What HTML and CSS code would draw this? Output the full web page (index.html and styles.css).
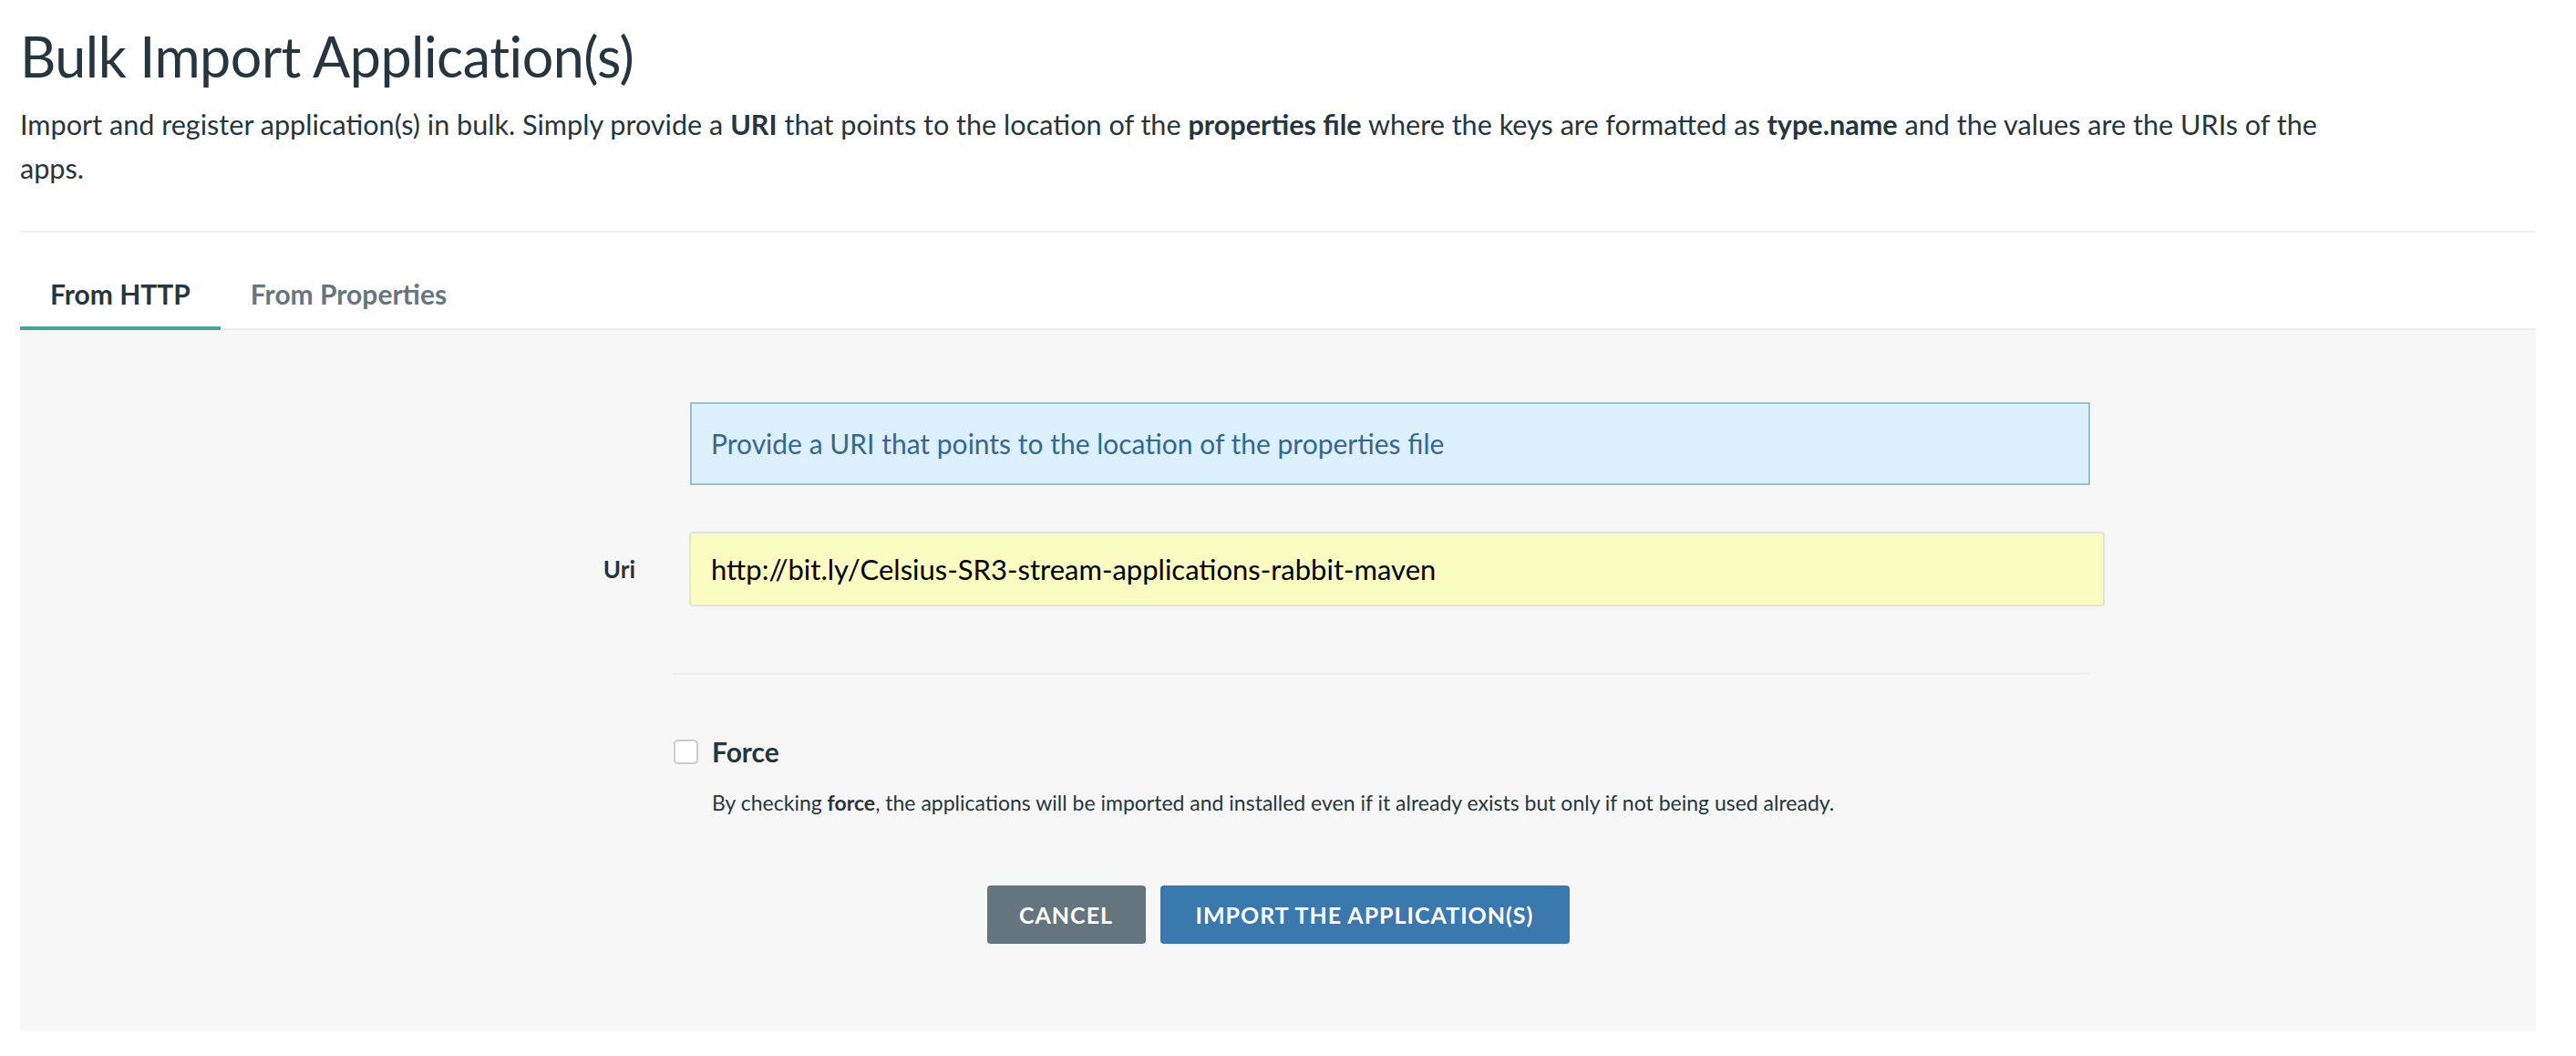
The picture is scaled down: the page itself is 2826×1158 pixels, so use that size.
FILE: index.html
```html
<!DOCTYPE html>
<html lang="en">
<head>
<meta charset="utf-8">
<title>Bulk Import Application(s)</title>
<link rel="stylesheet" href="styles.css">
</head>
<body>
<div class="page">
  <h1 class="title">Bulk Import Application(s)</h1>
  <p class="lead"><span>Import and register application(s) in bulk. Simply provide a <b>URI</b> that points to the location of the <b>properties file</b> where the keys are formatted as <b>type.name</b> and the values are the URIs of the</span> <span>apps.</span></p>
  <hr class="divider">

  <nav class="tabs">
    <a class="tab tab-active">From HTTP</a>
    <a class="tab">From Properties</a>
  </nav>

  <section class="panel">
    <form class="form">
      <div class="form-row">
        <div class="label-col"></div>
        <div class="field-col">
          <div class="info-box">Provide a URI that points to the location of the properties file</div>
        </div>
      </div>
      <div class="form-row row-uri">
        <label class="label-col uri-label">Uri</label>
        <div class="field-col">
          <div class="uri-input">http://bit.ly/Celsius-SR3-stream-applications-rabbit-maven</div>
        </div>
      </div>
      <div class="form-row">
        <div class="label-col"></div>
        <div class="field-col">
          <hr class="form-divider">
          <div class="check-row">
            <span class="checkbox"></span>
            <span class="check-label">Force</span>
          </div>
          <p class="help">By checking <b>force</b>, the applications will be imported and installed even if it already exists but only if not being used already.</p>
        </div>
      </div>
      <div class="actions">
        <button type="button" class="btn btn-cancel">Cancel</button>
        <button type="button" class="btn btn-primary">Import the application(s)</button>
      </div>
    </form>
  </section>
</div>
</body>
</html>
```

FILE: styles.css
```css
html, body {
  margin: 0;
  padding: 0;
  background: #ffffff;
}

body {
  font-family: "Lato", "Liberation Sans", sans-serif;
  color: #263640;
}

.page {
  padding: 0 44px 0 22px;
}

.title {
  margin: 0;
  padding-top: 26px;
  font-size: 61px;
  font-weight: 400;
  line-height: 72px;
  letter-spacing: -0.5px;
  color: #263640;
}

.lead {
  margin: 15px 0 0 0;
  max-width: 2580px;
  font-size: 30.6px;
  line-height: 48px;
  color: #263640;
}

.lead b {
  font-weight: 700;
}

.divider {
  margin: 44px 0 0 0;
  border: 0;
  height: 2px;
  background: #eeeeee;
}

.tabs {
  display: flex;
  margin-top: 48px;
  border-bottom: 2px solid #eeeeee;
}

.tab {
  display: block;
  padding: 0 33px 17px 33px;
  font-size: 30px;
  font-weight: 700;
  line-height: 38px;
  color: #66757f;
}

.tab-active {
  color: #263640;
  border-bottom: 4px solid #48a399;
  margin-bottom: -2px;
}

.panel {
  background: #f7f7f7;
  padding: 79px 0 96px 0;
}

.form-row {
  display: grid;
  grid-template-columns: 715px 1556px;
}

.label-col {
  box-sizing: border-box;
  padding-right: 40px;
  text-align: right;
}

.info-box {
  margin-left: 20px;
  height: 91px;
  box-sizing: border-box;
  border: 2px solid #96c2cc;
  background: #dcf0fe;
  color: #36678f;
  font-size: 30px;
  line-height: 87px;
  padding: 0 21px;
}

.row-uri {
  margin-top: 51px;
  align-items: center;
}

.uri-label {
  font-size: 26px;
  font-weight: 700;
  color: #263640;
}

.uri-input {
  margin-left: 19px;
  margin-right: -16px;
  height: 82px;
  box-sizing: border-box;
  border: 2px solid #e3e5e0;
  border-radius: 4px;
  background: #fafcc2;
  color: #000000;
  font-size: 31px;
  line-height: 78px;
  padding: 0 22px;
}

.form-divider {
  margin: 73px 0 0 0;
  border: 0;
  height: 2px;
  background: #eeeeee;
}

.check-row {
  display: flex;
  align-items: center;
  gap: 15px;
  margin-top: 66px;
  margin-left: 2px;
}

.checkbox {
  display: block;
  width: 27px;
  height: 27px;
  box-sizing: border-box;
  border: 2px solid #cccccc;
  border-radius: 5px;
  background: #ffffff;
}

.check-label {
  font-size: 30px;
  font-weight: 700;
  color: #263640;
  line-height: 36px;
}

.help {
  margin: 22px 0 0 44px;
  font-size: 23px;
  line-height: 32px;
  color: #263640;
}

.help b {
  font-weight: 700;
}

.actions {
  display: flex;
  justify-content: center;
  gap: 16px;
  margin-top: 75px;
}

.btn {
  height: 64px;
  border: 0;
  border-radius: 4px;
  color: #ffffff;
  font-family: "Lato", "Liberation Sans", sans-serif;
  font-size: 25px;
  font-weight: 700;
  letter-spacing: 1px;
  text-transform: uppercase;
  cursor: pointer;
}

.btn-cancel {
  width: 174px;
  background: #65757f;
}

.btn-primary {
  width: 449px;
  background: #3b78ae;
}
```
